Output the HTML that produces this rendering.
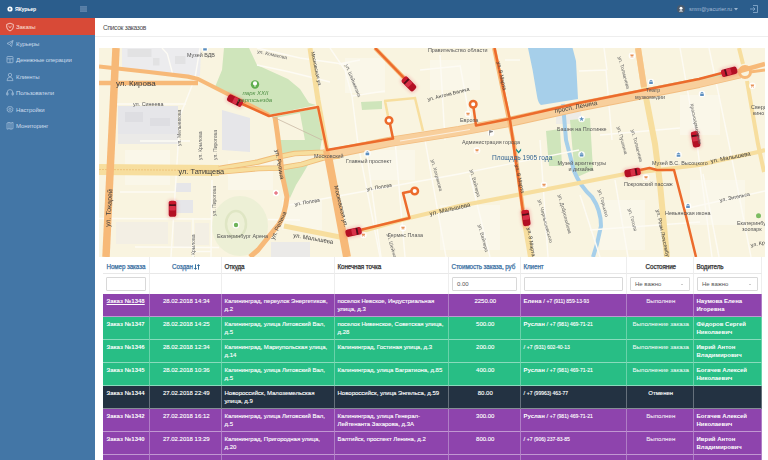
<!DOCTYPE html>
<html><head><meta charset="utf-8">
<style>
*{box-sizing:border-box;margin:0;padding:0}
html,body{width:768px;height:460px;overflow:hidden;background:#fff;font-family:"Liberation Sans",sans-serif}
#hdr{position:absolute;left:0;top:0;width:768px;height:18px;background:#2b5d8c}
#side{position:absolute;left:0;top:18px;width:95px;height:442px;background:#4376a6}
.logo{position:absolute;left:15px;top:5.5px;color:#fff;font-size:5.2px;font-weight:bold;letter-spacing:-.15px}
.email{position:absolute;left:689px;top:6px;color:#a3bad3;font-size:5.6px;letter-spacing:-.05px}
.si{position:absolute;left:0;width:95px;height:16.5px;color:#cddcec;font-size:6px;line-height:18px;padding-left:16px;letter-spacing:-.1px}
.si.act{background:#d84a37;color:#fbe0da}
#main{position:absolute;left:95px;top:18px;width:673px;height:442px;background:#fff}
.title{position:absolute;left:8px;top:6px;font-size:6.6px;color:#4a4a4a;letter-spacing:-.3px}
.div{position:absolute;left:0;top:18px;width:673px;height:1px;background:#eee}
#map{position:absolute;left:99px;top:48px;width:666px;height:209px;overflow:hidden;background:#f4eedb;filter:blur(.3px)}
table{position:absolute;left:103px;top:257px;border-collapse:separate;border-spacing:0;table-layout:fixed;font-size:6px;color:#fff;width:659px}
td,th{overflow:hidden;vertical-align:top;padding:2.7px 1px 0 2.5px;line-height:8px;border-right:1px solid rgba(255,255,255,.3);border-bottom:1px solid rgba(255,255,255,.45)}
th{height:17px;color:#333;font-weight:normal;-webkit-text-stroke:.25px currentColor;text-align:left;white-space:nowrap;font-size:6.3px;letter-spacing:-.12px;border-right:1px solid #eee;border-bottom:1px solid #e8e8e8;padding-top:6px;background:#fff}
tr td:first-child,tr th:first-child{padding-left:3.5px}
th.l{color:#3d72a4}
tr.f td{height:20px;border-right:1px solid #eee;border-bottom:0;padding:3px;background:#fff}
tr.r td{height:23px;-webkit-text-stroke:.12px currentColor}
.pu td{background:#8e44ad}
.gr td{background:#28be85}
.dk td{background:#233242}
.c{text-align:center}
.ph{font-size:5px}
tr.r td.st{color:rgba(255,255,255,.85);-webkit-text-stroke:.1px currentColor;font-size:6.2px}
.sel:after{content:"";position:absolute;right:6px;top:5.5px;border-left:1.5px solid transparent;border-right:1.5px solid transparent;border-top:1.8px solid #999}
b{font-weight:bold;-webkit-text-stroke:0}
.inp{height:14px;border:1px solid #d8d8d8;border-radius:1px;font-size:6px;color:#555;line-height:12px;padding-left:4px;position:relative}
</style></head><body>
<div id="hdr">
  <svg style="position:absolute;left:7px;top:6px" width="6" height="6" viewBox="0 0 6 6"><circle cx="3" cy="3" r="2.6" fill="#fff"/><path d="M2.3,1.7 L4.2,3 L2.3,4.3 Z" fill="#2b5d8c"/></svg>
  <div class="logo">ЯКурьер</div>
  <svg style="position:absolute;left:80px;top:6px" width="7" height="6" viewBox="0 0 7 6"><rect x="0" y="0" width="7" height="6" fill="#4b739c"/><g fill="#6a8fb5"><rect y="0.5" width="7" height=".8"/><rect y="2.6" width="7" height=".8"/><rect y="4.7" width="7" height=".8"/></g></svg>
  <svg style="position:absolute;left:677px;top:5px" width="8" height="8" viewBox="0 0 8 8"><circle cx="4" cy="4" r="4" fill="#4a5a6c"/><circle cx="4" cy="3.2" r="1.5" fill="#fff"/><path d="M1.8,6.6 Q4,3.8 6.2,6.6 Z" fill="#fff"/></svg>
  <div class="email">smm@yacurier.ru</div>
  <svg style="position:absolute;left:734px;top:8px" width="4" height="3" viewBox="0 0 4 3"><path d="M0,0 L4,0 L2,2.5Z" fill="#9db6d0"/></svg>
  <svg style="position:absolute;left:749px;top:4px" width="10" height="10" viewBox="0 0 10 10" fill="none" stroke="#8fb0d0" stroke-width=".8"><path d="M4,1.5 L8.5,1.5 L8.5,8.5 L4,8.5"/><path d="M1,5 L6,5 M4.2,3.2 L6,5 L4.2,6.8"/></svg>
</div>
<div id="side">
  <div class="si act" style="top:0">Заказы</div>
  <div class="si" style="top:16.5px">Курьеры</div>
  <div class="si" style="top:33px">Денежные операции</div>
  <div class="si" style="top:49.5px">Клиенты</div>
  <div class="si" style="top:66px">Пользователи</div>
  <div class="si" style="top:82.5px">Настройки</div>
  <div class="si" style="top:99px">Мониторинг</div>
  <svg style="position:absolute;left:0;top:0" width="95" height="120" viewBox="0 0 95 120" fill="none" stroke-width=".8">
    <g stroke="#fde4de"><path d="M10,5.2 L13.3,6.4 L13.3,9 Q13.3,11.6 10,13 Q6.7,11.6 6.7,9 L6.7,6.4 Z"/><path d="M8.5,8.2 L10,9.6 L11.5,8.2"/></g>
    <g stroke="#c3d5ea" opacity=".75" stroke-width=".75">
      <path d="M7,25.5 L13,22.5 L11.5,28.5 L9.7,26.6 Z M9.7,26.6 L13,22.5"/>
      <rect x="7" y="38.5" width="6" height="6.2" rx=".6"/><path d="M7,40.8 L13,40.8 M10,40.8 L10,44.7"/>
      <circle cx="10" cy="57" r="1.7"/><path d="M7,62.6 Q7.2,59.2 10,59 Q12.8,59.2 13,62.6 Z"/>
      <path d="M7.2,77 L7.2,74.6 Q7.2,71.6 10,71.6 Q12.8,71.6 12.8,74.6 L12.8,77"/><rect x="6.7" y="74.6" width="1.3" height="2.6" rx=".4"/><rect x="12" y="74.6" width="1.3" height="2.6" rx=".4"/>
      <circle cx="10" cy="91.3" r="1.1"/><path d="M10,88.2 L10.7,89 L11.8,88.7 L12,89.8 L13.1,90.4 L12.6,91.3 L13.1,92.2 L12,92.8 L11.8,93.9 L10.7,93.6 L10,94.4 L9.3,93.6 L8.2,93.9 L8,92.8 L6.9,92.2 L7.4,91.3 L6.9,90.4 L8,89.8 L8.2,88.7 L9.3,89 Z"/>
      <path d="M7,105 L9,104.4 L11,105 L13,104.4 L13,110.6 L11,111.2 L9,110.6 L7,111.2 Z M9,104.4 L9,110.6 M11,105 L11,111.2"/>
    </g>
  </svg>
</div>
<div id="main">
  <div class="title">Список заказов</div>
  <div class="div"></div>
</div>
<div id="map"><svg id="msvg" width="666" height="209" viewBox="99 48 666 209" font-family="Liberation Sans, sans-serif">
<defs>
<filter id="gl" x="-60%" y="-60%" width="220%" height="220%"><feGaussianBlur stdDeviation="1.5"/></filter>
<g id="car"><rect x="-9.5" y="-5.2" width="19" height="10.4" rx="4" fill="#e83048" opacity=".22" filter="url(#gl)"/><rect x="-8" y="-3.8" width="16" height="7.6" rx="2.6" fill="#b30f24"/><rect x="-1.8" y="-3.2" width="4.6" height="6.4" rx="1" fill="#d83048"/><rect x="2.8" y="-3.3" width="1.8" height="6.6" fill="#50101a"/><rect x="4.6" y="-3.6" width="3.2" height="7.2" rx="2" fill="#c8182e"/></g>
</defs>
<rect x="99" y="48" width="666" height="209" fill="#f9f4e0"/>
<!-- lighter blocks -->
<g fill="#faf7e9">
<rect x="228" y="160" width="45" height="30"/><rect x="430" y="60" width="50" height="30"/><rect x="600" y="200" width="45" height="50"/><rect x="345" y="58" width="40" height="35"/>
<rect x="690" y="180" width="55" height="45"/><rect x="125" y="150" width="45" height="35"/><rect x="440" y="205" width="60" height="45"/><rect x="680" y="95" width="40" height="40"/>
<rect x="282" y="200" width="40" height="30"/><rect x="370" y="150" width="45" height="30"/><rect x="116" y="222" width="52" height="22" fill="#f3efe4"/><rect x="174" y="222" width="17" height="25" fill="#f3efe4"/><rect x="195" y="223" width="14" height="22" fill="#f3efe4"/>
</g>
<!-- gray building areas -->
<g fill="#e6e6e9">
<polygon points="122,48 201,48 200,76 188,76 149,71.5 122,68.5" fill="#ececee"/>
<rect x="127.5" y="49" width="24" height="8" fill="#e2e2e3"/><rect x="153" y="58" width="6.5" height="7.5" fill="#e2e2e3"/><rect x="175" y="56" width="10.5" height="8" fill="#e2e2e3"/>
<rect x="118" y="106" width="60" height="28"/><rect x="118" y="134" width="60" height="10" fill="#ebeae8"/><rect x="125" y="112" width="18" height="10" fill="#dedee2"/><rect x="150" y="118" width="20" height="8" fill="#dedee2"/>
<polygon points="222,110 250,118 250,152 222,150"/>
<rect x="176" y="183" width="15" height="9"/>
<rect x="176" y="200" width="17" height="13"/>
<rect x="271" y="242" width="39" height="15" fill="#ebeae8"/>
<rect x="556" y="112" width="25" height="12" fill="#eeece6"/>
</g>
<!-- park -->
<polygon fill="#cfe5bb" points="224,48 249,48 257,65 288,79 300,89 309,103 316,105 269,115 236,100 215,87 222,70"/>
<polygon fill="#cfe5bb" points="272,117 318,108 322,128 324,140 280,140 276,130"/>
<polygon fill="#f9f4e0" points="270,119 300,113 306,146 280,146"/>
<polygon fill="#cfe5bb" points="279,140 321.7,140 320,150.7 280,157"/><polygon fill="#cfe5bb" points="284.4,167 308,165 301.6,176 296,185 290,198 284.4,185"/>
<ellipse cx="240" cy="226" rx="28" ry="30" fill="#edf0d6"/>
<ellipse cx="236" cy="224" rx="10" ry="13" fill="none" stroke="#dfe6c4" stroke-width="2.5"/>
<g fill="#cfe5bb"><polygon points="546,131 560,129 562,166 549,166"/><polygon points="570,120 590,118 593,170 575,178"/><polygon points="579,140 589,140 589,170 579,170"/><polygon points="644,89 722,74 723,77 646,92"/><polygon points="361,102 382,101 382,109 362,110"/></g>
<!-- water -->
<path d="M528,48 L572.6,48 L576,61 L578,99 L541,105 Q538,103 537,96 L532.6,70 Z" fill="#a6cfea"/>
<path d="M563,104 L566,140 L574,171 Q580,186 592,197 Q601,210 601,226 L597,244 L593,257" fill="none" stroke="#a6cfea" stroke-width="4"/>
<!-- white streets -->
<g stroke="#fdfbf4" stroke-width="1.4" fill="none">
<path d="M117,104 L186,104"/><path d="M162,48 L167.3,53.8 L172.5,73.3"/><path d="M200,48 L195,78 L180,116 L171,257"/><path d="M140,141 L190,141"/>
<path d="M99,218.5 L212,219 M268,219.5 L300,220"/><path d="M135,247 L219,247.5"/><path d="M192,251.5 L211,251.5"/><path d="M212,180 L211,257"/><path d="M193,218 L193,257"/><path d="M120,192 L175,192"/>
<path d="M257,48 L300,58 L350,65"/><path d="M257,65 L290,72 L330,82"/><path d="M330,48 L345,70 L352,96 L358,144 L380,257"/><path d="M352,96 L385,91"/>
<path d="M289,205 L459,174 L579,150"/><path d="M365,140 L381,257"/><path d="M395,140 L405,257"/><path d="M425,140 L446,257"/>
<path d="M339,64 L360,60"/><path d="M440,55 L445,140"/><path d="M460,65 L470,120"/><path d="M420,70 L460,66"/>
<path d="M604,48 L607,70"/><path d="M579,71 L606,70 L612,140"/><path d="M680,48 L697,144 L712,257"/><path d="M709,48 L729,144 L751,257"/>
<path d="M688,208 L765,191"/><path d="M703,174 L719,257"/><path d="M590,230 L700,222"/><path d="M600,135 L680,128"/>
<path d="M540,140 L548,257"/><path d="M505,60 L520,60"/><path d="M470,175 L490,257"/><path d="M580,195 L600,257"/><path d="M615,180 L628,257"/>
</g>
<!-- yellow roads -->
<g stroke="#f7de9e" fill="none">
<path d="M99,169.5 L219,170.5" stroke-width="11"/>
<path d="M219,168.5 L258,162 L273,158 L294.5,153.6 L323,152.2 L340,150.7" stroke="#f0bc78" stroke-width="5.5"/><path d="M219,168.5 L258,162 L273,158 L294.5,153.6 L323,152.2 L340,150.7" stroke-width="3.8"/>
<path d="M219,172 L258.7,168.5 L280,168 L301.6,164.4 L323,158 L340,155.8" stroke="#f0bc78" stroke-width="5.5"/><path d="M219,172 L258.7,168.5 L280,168 L301.6,164.4 L323,158 L340,155.8" stroke-width="3.8"/>
<path d="M284,226 L345,238" stroke-width="5"/>
<path d="M345,236 L409,218 L459,206 L579,183 L625,174 L699,165 L758,152 L765,150" stroke-width="4.2"/>
<path d="M638,48 L644,87 L655,144 L660,184 L667,257" stroke-width="6"/>
<path d="M638,48 L644,87" stroke="#f7c488" stroke-width="6"/>
<path d="M739,48 L743,64 M747,81 L758,144 L764,172" stroke-width="4"/>
<path d="M384,101 L415,98 L423,131 M385,101 L388,116" stroke-width="2.5"/>
<path d="M523,210 L531,257" stroke-width="6"/>
<path d="M310,48 L318,100 L327,150" stroke-width="5"/>
</g>
<path d="M99,169.5 L219,170.5" stroke="#e8b060" stroke-width=".8" stroke-dasharray="2 1" fill="none" opacity=".7"/>
<!-- orange roads -->
<g stroke="#f7b978" fill="none" stroke-linejoin="round">
<path d="M116,48 L106,257" stroke-width="7.5"/>
<path d="M99,83 L198,83" stroke-width="4.5"/>
<path d="M99,66.5 L149,72 L188,76.6 L198,79 L269,115" stroke-width="4.2"/>
<path d="M275,117 Q280,150 282,174 L287,197 Q285,215 279,224 L258,250 L250,257" stroke-width="5"/>
<path d="M327,150 L347,257" stroke-width="8"/>
<path d="M330,154 L389,142 L459,131 L509,122 L579,106.5 L699,83 L740,73.5" stroke-width="10" stroke="#f2bd80"/><path d="M330,154 L389,142 L459,131 L509,122 L579,106.5 L699,83 L740,73.5" stroke-width="8.4" stroke="#f8cf9c"/>
<path d="M400,141 L470,129.5" stroke="#fbeedd" stroke-width="1.2"/><path d="M740,71 L765,64" stroke-width="4.5"/>
<path d="M750,72 L765,70" stroke-width="3"/>
<path d="M375,48 L409,83" stroke-width="4"/>
<path d="M494,48 L514,144 L523,210" stroke-width="4"/>
<circle cx="745" cy="72" r="5.5" stroke-width="3"/>
</g>
<path d="M269,115 L322,140" stroke="#c9b9a5" stroke-width=".8" fill="none"/>
<path d="M650,88.5 L722,74.5" stroke="#cfe5bb" stroke-width="1.8"/>
<!-- route -->
<g stroke="#ec6b2c" stroke-width="2.5" fill="none" stroke-linejoin="round">
<path d="M240,103 L269,116 L318,107 L327,150 L393,138.5 L390,124"/>
<circle cx="389" cy="120.5" r="3.3" fill="#fff"/>
<path d="M375,48 L406,80"/>
<path d="M473.5,107.5 L476,125.5 L509,119 L579,103 L699,79 L722,73"/>
<circle cx="473.2" cy="104.2" r="3.3" fill="#fff"/>
<path d="M494.5,48 L510,120 L523,212"/>
<path d="M411.3,191.2 L403,193 L409.5,218 L360,230"/>
<circle cx="414.7" cy="191" r="3.3" fill="#fff"/>
<path d="M640,170 L649.5,168 L657,170 L674,170 L686,216 L696,257"/>
</g>
<g id="pois">
<circle cx="468" cy="114" r="3.3" fill="#fff" opacity=".9"/>
<path d="M466.2,112.8 L469.8,112.8 L469.2,114.8 L466.8,114.8 Z" fill="#e8945a"/><circle cx="467.1" cy="115.6" r=".45" fill="#e8945a"/><circle cx="468.9" cy="115.6" r=".45" fill="#e8945a"/>
<circle cx="477" cy="150.5" r="3.3" fill="#fff" opacity=".9"/>
<path d="M475.2,149.3 L478.8,149.3 L478.2,151.3 L475.8,151.3 Z" fill="#e8945a"/><circle cx="476.1" cy="152.1" r=".45" fill="#e8945a"/><circle cx="477.9" cy="152.1" r=".45" fill="#e8945a"/>
<circle cx="491" cy="133" r="3.3" fill="#fff" opacity=".9"/>
<path d="M489.5,135.5 V130.5 L493,131.5 L489.5,132.7" stroke="#777" stroke-width=".6" fill="#888"/>
<circle cx="367.4" cy="153.4" r="3.3" fill="#fff" opacity=".9"/>
<path d="M365.4,152.6 L367.4,151.20000000000002 L369.4,152.6 Z M365.59999999999997,153.1 h3.6 v2.2 h-3.6 Z" fill="#5d8fc0"/>
<circle cx="544" cy="185" r="3.3" fill="#fff" opacity=".9"/>
<path d="M542.2,183.8 L545.8,183.8 L545.2,185.8 L542.8,185.8 Z" fill="#e8945a"/><circle cx="543.1" cy="186.6" r=".45" fill="#e8945a"/><circle cx="544.9" cy="186.6" r=".45" fill="#e8945a"/>
<path d="M516.1,148.4 L518.6,151.4 L521.1,148.4 L521.1,150.4 L518.6,153.4 L516.1,150.4 Z" fill="#1b8a8a"/>
<circle cx="581.6" cy="119" r="3.3" fill="#fff" opacity=".9"/>
<path d="M581.6,116.6 L582.3000000000001,118.3 L584.0,118.3 L582.6,119.4 L583.1,121.2 L581.6,120.1 L580.1,121.2 L580.6,119.4 L579.2,118.3 L580.9,118.3 Z" fill="#5d8fc0"/>
<circle cx="632" cy="55.8" r="3.3" fill="#fff" opacity=".9"/>
<path d="M630.2,54.599999999999994 L633.8,54.599999999999994 L633.2,56.599999999999994 L630.8,56.599999999999994 Z" fill="#e8945a"/><circle cx="631.1" cy="57.4" r=".45" fill="#e8945a"/><circle cx="632.9" cy="57.4" r=".45" fill="#e8945a"/>
<circle cx="651" cy="82" r="3.3" fill="#fff" opacity=".9"/>
<path d="M649,81.2 L651,79.8 L653,81.2 Z M649.2,81.7 h3.6 v2.2 h-3.6 Z" fill="#5d8fc0"/>
<circle cx="702" cy="94" r="3.3" fill="#fff" opacity=".9"/>
<path d="M700,93.2 L702,91.8 L704,93.2 Z M700.2,93.7 h3.6 v2.2 h-3.6 Z" fill="#5d8fc0"/>
<circle cx="752.4" cy="85.7" r="3.3" fill="#fff" opacity=".9"/>
<path d="M750.6,84.5 L754.1999999999999,84.5 L753.6,86.5 L751.1999999999999,86.5 Z" fill="#e8945a"/><circle cx="751.5" cy="87.3" r=".45" fill="#e8945a"/><circle cx="753.3" cy="87.3" r=".45" fill="#e8945a"/>
<circle cx="581.6" cy="154.5" r="3.3" fill="#fff" opacity=".9"/>
<path d="M579.6,153.7 L581.6,152.3 L583.6,153.7 Z M579.8000000000001,154.2 h3.6 v2.2 h-3.6 Z" fill="#5d8fc0"/>
<circle cx="646" cy="177.5" r="3.3" fill="#fff" opacity=".9"/>
<path d="M644.2,176.3 L647.8,176.3 L647.2,178.3 L644.8,178.3 Z" fill="#e8945a"/><circle cx="645.1" cy="179.1" r=".45" fill="#e8945a"/><circle cx="646.9" cy="179.1" r=".45" fill="#e8945a"/>
<circle cx="678.5" cy="154.8" r="3.3" fill="#fff" opacity=".9"/>
<path d="M676.5,154.0 L678.5,152.60000000000002 L680.5,154.0 Z M676.7,154.5 h3.6 v2.2 h-3.6 Z" fill="#5d8fc0"/>
<circle cx="276" cy="193" r="3.2" fill="#fff"/><path d="M274,193 H278 M276,191 V195" stroke="#e05060" stroke-width="1"/>
<circle cx="363.4" cy="235" r="3.3" fill="#fff" opacity=".9"/>
<path d="M361.59999999999997,233.8 L365.2,233.8 L364.59999999999997,235.8 L362.2,235.8 Z" fill="#e8945a"/><circle cx="362.5" cy="236.6" r=".45" fill="#e8945a"/><circle cx="364.29999999999995" cy="236.6" r=".45" fill="#e8945a"/>
<circle cx="403" cy="228" r="3.3" fill="#fff" opacity=".9"/>
<path d="M401.2,226.8 L404.8,226.8 L404.2,228.8 L401.8,228.8 Z" fill="#e8945a"/><circle cx="402.1" cy="229.6" r=".45" fill="#e8945a"/><circle cx="403.9" cy="229.6" r=".45" fill="#e8945a"/>
<circle cx="688" cy="206" r="3.3" fill="#fff" opacity=".9"/>
<path d="M686,205.2 L688,203.8 L690,205.2 Z M686.2,205.7 h3.6 v2.2 h-3.6 Z" fill="#5d8fc0"/>
<circle cx="205" cy="48.5" r="3.3" fill="#fff" opacity=".9"/>
<path d="M203,47.7 L205,46.3 L207,47.7 Z M203.2,48.2 h3.6 v2.2 h-3.6 Z" fill="#5d8fc0"/>
</g>
<!-- cars -->
<use href="#car" transform="translate(235,100.5) rotate(27)"/>
<use href="#car" transform="translate(409,84) rotate(225)"/>
<use href="#car" transform="translate(172.5,208.8) rotate(-90)"/>
<use href="#car" transform="translate(353.5,232) rotate(-12)"/>
<use href="#car" transform="translate(526,218) rotate(-98)"/>
<use href="#car" transform="translate(632.5,172.5) rotate(-10)"/>
<use href="#car" transform="translate(695.6,139.3) rotate(-100)"/>
<use href="#car" transform="translate(729.3,71.7) rotate(165)"/>
<!-- labels -->
<g fill="#555" font-size="5.4">
<text x="187" y="57">Музей ВДВ</text>
<text x="133" y="106">ул. Синеева</text>
<text x="217" y="238">Екатеринбург Арена</text>
<text x="346" y="163">Главный проспект</text>
<text x="462" y="143.5">Администрация города</text>
<text x="460" y="122">Европа</text>
<text x="428" y="51.5">Правительство области</text>
<text x="557" y="130.5">Башня на Плотинке</text>
<text x="557.5" y="164.5">Музей архитектуры</text>
<text x="568.5" y="170.5">и дизайна</text>
<text x="624" y="186">Покровский пассаж</text>
<text x="652" y="165">Музей В.С. Высоцкого</text>
<text x="388" y="237">Гермес Плаза</text>
<text x="665" y="215">Невьянская икона</text>
<text x="737" y="225">Екатеринбург</text>
<text x="742" y="231">зоопарк</text>
<text x="751" y="109">Сверд</text><text x="753" y="115">кино</text>
<text x="314" y="157.5">Московский</text>
<text x="635" y="99">музкомедии</text>
<text x="646" y="92">Театр</text>
</g>
<g fill="#3c3c3c">
<text x="116" y="85.7" font-size="8">ул. Кирова</text>
<text x="178.5" y="173.8" font-size="7.4">ул. Татищева</text>
<text x="492" y="159.5" font-size="6.6" fill="#356591">Площадь 1905 года</text>
<text x="293" y="237" font-size="6" transform="rotate(10 293 237)">ул. Малышева</text>
<text x="711" y="163" font-size="6" transform="rotate(-11 711 163)">ул. Малышева</text>
<text x="430" y="215.8" font-size="6.2" transform="rotate(-13 430 215.8)">ул. Малышева</text>
<text x="555" y="113" font-size="6.5" transform="rotate(-11 555 113)">просп. Ленина</text>
<text x="295" y="206" font-size="5" transform="rotate(-10 295 206)">ул. Попова</text>
<text x="367" y="191" font-size="5" transform="rotate(-10 367 191)">ул. Попова</text>
<text x="110" y="227" font-size="7" transform="rotate(-86 110 227)">ул. Токарей</text>
<text x="275" y="150" font-size="6" transform="rotate(80 275 150)">ул. Репина</text>
<text x="311" y="52" font-size="5" transform="rotate(78 311 52)">Московская ул.</text>
<text x="274" y="240" font-size="6" transform="rotate(-65 274 240)">ул. Репина</text>
<text x="334" y="186" font-size="6" transform="rotate(76 334 186)">Московская ул.</text>
<text x="428" y="101" font-size="5" transform="rotate(-14 428 101)">ул. Антона Валека</text>
<text x="515" y="165" font-size="5.4" transform="rotate(78 515 165)">ул. 8 Марта</text><text x="497" y="62" font-size="5.4" transform="rotate(78 497 62)">ул. 8 Марта</text>
<text x="527" y="228" font-size="5.4" transform="rotate(80 527 228)">ул. 8 Марта</text>
<text x="656" y="210" font-size="5.4" transform="rotate(78 656 210)">ул. Розы Люксембург</text>
<text x="720" y="202" font-size="5.2" transform="rotate(-12 720 202)">ул. Энгельса</text><text x="751" y="247" font-size="5.2" transform="rotate(-12 751 247)">ул. Кр</text>
</g>
<g fill="#666" font-size="5">
<text x="181" y="146" transform="rotate(-90 181 146)">ул. Мельникова</text>
<text x="202" y="160" transform="rotate(-90 202 160)">ул. Крылова</text>
<text x="217" y="160" transform="rotate(-90 217 160)">ул. Пирогова</text>
<text x="216" y="216" transform="rotate(-90 216 216)">ул. Пирогова</text><text x="195" y="263" transform="rotate(-90 195 263)">ул. Крылова</text>
<text x="387" y="234" transform="rotate(75 387 234)">ул. Шейнкмана</text>
<text x="431" y="160" transform="rotate(75 431 160)">ул. Хохрякова</text>
<text x="470" y="170" transform="rotate(75 470 170)">ул. Вайнера</text>
<text x="478" y="225" transform="rotate(75 478 225)">ул. Вайнера</text>
<text x="538" y="200" transform="rotate(75 538 200)">ул. Чернышевского</text>
<text x="558" y="195" transform="rotate(75 558 195)">ул. Добролюбова</text>
<text x="598" y="190" transform="rotate(75 598 190)">ул. Горького</text>
<text x="628" y="209" transform="rotate(75 628 209)">ул. Гоголя</text>
<text x="618" y="57" transform="rotate(75 618 57)">ул. Толмачева</text>
<text x="617" y="127" transform="rotate(75 617 127)">ул. Пушкина</text><text x="631" y="130" transform="rotate(75 631 130)">ул. Толмачева</text>
<text x="690" y="104" transform="rotate(78 690 104)">Красноармейская</text>
<text x="345" y="65" transform="rotate(68 345 65)">ул. Шейнкмана</text>
<text x="257" y="53" transform="rotate(12 257 53)">ул. Комакова</text>
</g>
<text x="242.5" y="94.5" font-size="6" fill="#4f8f45" font-style="italic">парк XXII</text>
<text x="238" y="101.5" font-size="6" fill="#4f8f45" font-style="italic">партсъезда</text>
<circle cx="255" cy="84.5" r="4.2" fill="#5fae4e"/><circle cx="255" cy="83.4" r="2.1" fill="#fff"/><rect x="254.6" y="84" width=".8" height="3" fill="#fff"/>
<circle cx="236" cy="225" r="3.4" fill="#fff"/><circle cx="236" cy="225" r="2.2" fill="#6db35a"/>
<circle cx="758.5" cy="215.7" r="2.5" fill="#7cbc62"/>
</svg></div>
<table>
<colgroup><col style="width:47px"><col style="width:72px"><col style="width:113px"><col style="width:114px"><col style="width:72px"><col style="width:106px"><col style="width:67px"><col style="width:68px"></colgroup>
<tr><th class="l">Номер заказа</th><th class="l c">Создан <svg width="6" height="6" viewBox="0 0 6 6" style="vertical-align:-.5px"><path d="M1.5,0.3 V5.2 M0.3,4 L1.5,5.4 L2.7,4 M4.5,5.7 V0.8 M3.3,2 L4.5,0.6 L5.7,2" stroke="#1f5f8f" stroke-width=".9" fill="none"/></svg></th><th>Откуда</th><th>Конечная точка</th><th class="l">Стоимость заказа, руб</th><th class="l">Клиент</th><th class="c">Состояние</th><th>Водитель</th></tr>
<tr class="f"><td><div class="inp"></div></td><td></td><td></td><td></td><td><div class="inp">0.00</div></td><td><div class="inp"></div></td><td><div class="inp sel">Не важно</div></td><td><div class="inp sel">Не важно</div></td></tr>
<tr class="r pu"><td><b><u>Заказ №1348</u></b></td><td class="c">28.02.2018 14:34</td><td>Калининград, переулок Энергетиков, д.2</td><td>поселок Невское, Индустриальная улица, д.3</td><td class="c">2250.00</td><td><b>Елена</b> / <span class="ph">+7 (911) 859-13-93</span></td><td class="c st">Выполнен</td><td><b>Наумова Елена Игоревна</b></td></tr>
<tr class="r gr"><td><b>Заказ №1347</b></td><td class="c">28.02.2018 14:25</td><td>Калининград, улица Литовский Вал, д.5</td><td>поселок Нивенское, Советская улица, д.28</td><td class="c">500.00</td><td><b>Руслан</b> / <span class="ph">+7 (981) 469-71-21</span></td><td class="c st">Выполнение заказа</td><td><b>Фёдоров Сергей Николаевич</b></td></tr>
<tr class="r gr"><td><b>Заказ №1346</b></td><td class="c">28.02.2018 12:34</td><td>Калининград, Мариупольская улица, д.14</td><td>Калининград, Гостиная улица, д.3</td><td class="c">200.00</td><td>/ <span class="ph">+7 (931) 602-40-13</span></td><td class="c st">Выполнение заказа</td><td><b>Иврий Антон Владимирович</b></td></tr>
<tr class="r gr"><td><b>Заказ №1345</b></td><td class="c">28.02.2018 10:36</td><td>Калининград, улица Литовский Вал, д.5</td><td>Калининград, улица Багратиона, д.85</td><td class="c">400.00</td><td><b>Руслан</b> / <span class="ph">+7 (981) 469-71-21</span></td><td class="c st">Выполнение заказа</td><td><b>Богачев Алексей Николаевич</b></td></tr>
<tr class="r dk"><td><b>Заказ №1344</b></td><td class="c">27.02.2018 22:49</td><td>Новороссийск, Малоземельская улица, д.9</td><td>Новороссийск, улица Энгельса, д.59</td><td class="c">80.00</td><td>/ <span class="ph">+7 (99963) 463-77</span></td><td class="c">Отменен</td><td></td></tr>
<tr class="r pu"><td><b>Заказ №1342</b></td><td class="c">27.02.2018 16:12</td><td>Калининград, улица Литовский Вал, д.5</td><td>Калининград, улица Генерал-Лейтенанта Захарова, д.3А</td><td class="c">300.00</td><td><b>Руслан</b> / <span class="ph">+7 (981) 469-71-21</span></td><td class="c st">Выполнен</td><td><b>Богачев Алексей Николаевич</b></td></tr>
<tr class="r pu"><td><b>Заказ №1340</b></td><td class="c">27.02.2018 13:29</td><td>Калининград, Пригородная улица, д.20</td><td>Балтийск, проспект Ленина, д.2</td><td class="c">800.00</td><td>/ <span class="ph">+7 (906) 237-83-85</span></td><td class="c st">Выполнен</td><td><b>Иврий Антон Владимирович</b></td></tr>
<tr class="r pu"><td></td><td></td><td></td><td></td><td></td><td></td><td></td><td></td></tr>
</table>
</body></html>
